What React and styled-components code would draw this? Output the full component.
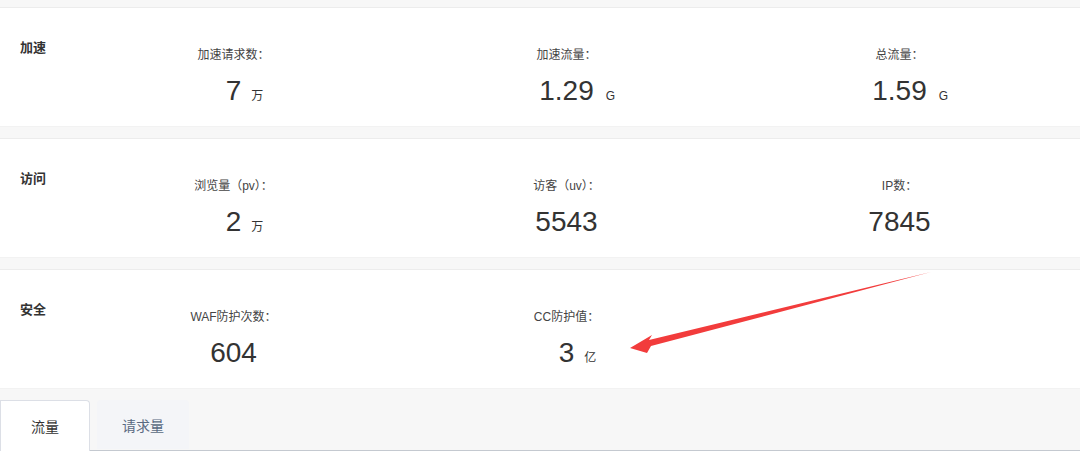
import styled, { createGlobalStyle } from 'styled-components';

const GlobalStyle = createGlobalStyle`
  html, body {
    margin: 0;
    padding: 0;
    background: #f7f7f7;
    font-family: "Liberation Sans", Arial, "Noto Sans CJK SC", sans-serif;
    color: #333;
  }
`;

const Page = styled.div`
  position: relative;
  width: 1080px;
  height: 451px;
  padding-top: 7px;
  box-sizing: border-box;
  overflow: hidden;
`;

const Card = styled.section`
  display: grid;
  grid-template-columns: 67px repeat(3, 1fr);
  height: 120px;
  box-sizing: border-box;
  padding-right: 14px;
  margin-bottom: 11px;
  background: #fff;
  border-top: 1px solid #ececec;
  border-bottom: 1px solid #f2f2f2;

  &:last-of-type {
    margin-bottom: 0;
  }
`;

const Title = styled.h3`
  margin: 30px 0 0 20px;
  font-size: 13px;
  line-height: 20px;
  font-weight: bold;
  color: #333;
  white-space: nowrap;
`;

const Stat = styled.div`
  display: flex;
  flex-direction: column;
  align-items: center;
  padding-top: 38px;
`;

const Label = styled.div`
  font-size: 12px;
  line-height: 18px;
  color: #444;
  white-space: nowrap;
`;

const ValueRow = styled.div`
  display: grid;
  grid-template-columns: 1fr auto 1fr;
  align-items: baseline;
  width: 100%;
  margin-top: 11px;
`;

const Number = styled.span`
  grid-column: 2;
  font-size: 28px;
  line-height: 32px;
  color: #333;
`;

const Unit = styled.span`
  grid-column: 3;
  justify-self: start;
  margin-left: ${(p) => (p.$latin ? '12px' : '10px')};
  font-size: 12px;
  color: #333;
`;

const TabBar = styled.div`
  display: flex;
  align-items: flex-end;
  height: 62px;
  box-sizing: border-box;
  padding-top: 11px;
  border-bottom: 1px solid #c4c9d0;
`;

const Tab = styled.div`
  display: flex;
  align-items: center;
  justify-content: center;
  box-sizing: border-box;
  font-size: 14px;
  font-family: "Liberation Sans", "Noto Sans CJK SC", sans-serif;
  ${(p) =>
    p.$active
      ? `
    width: 90px;
    height: 51px;
    margin-bottom: -1px;
    background: #fff;
    color: #333;
    border: 1px solid #dcdfe6;
    border-bottom: none;
    border-radius: 0 4px 0 0;
  `
      : `
    width: 92px;
    height: 49px;
    margin-left: 7px;
    margin-bottom: 1px;
    background: #f4f5f8;
    color: #5a6a82;
    border-radius: 4px 4px 0 0;
  `}
`;

const Arrow = styled.svg`
  position: absolute;
  left: 0;
  top: 0;
  pointer-events: none;
`;

const sections = [
  {
    title: '加速',
    stats: [
      { label: '加速请求数：', value: '7', unit: '万' },
      { label: '加速流量：', value: '1.29', unit: 'G', latin: true },
      { label: '总流量：', value: '1.59', unit: 'G', latin: true },
    ],
  },
  {
    title: '访问',
    stats: [
      { label: '浏览量（pv）：', value: '2', unit: '万' },
      { label: '访客（uv）：', value: '5543' },
      { label: 'IP数：', value: '7845' },
    ],
  },
  {
    title: '安全',
    stats: [
      { label: 'WAF防护次数：', value: '604' },
      { label: 'CC防护值：', value: '3', unit: '亿' },
    ],
  },
];

export default function App() {
  return (
    <>
      <GlobalStyle />
      <Page>
        {sections.map((s) => (
          <Card key={s.title}>
            <Title>{s.title}</Title>
            {s.stats.map((st) => (
              <Stat key={st.label}>
                <Label>{st.label}</Label>
                <ValueRow>
                  <Number>{st.value}</Number>
                  {st.unit && <Unit $latin={st.latin}>{st.unit}</Unit>}
                </ValueRow>
              </Stat>
            ))}
          </Card>
        ))}
        <TabBar>
          <Tab $active>流量</Tab>
          <Tab>请求量</Tab>
        </TabBar>
        <Arrow width="1080" height="451" viewBox="0 0 1080 451">
          <polygon
            points="630,348 652,335 649,340 931,272 651,346 647,353"
            fill="#f23c3c"
          />
        </Arrow>
      </Page>
    </>
  );
}
